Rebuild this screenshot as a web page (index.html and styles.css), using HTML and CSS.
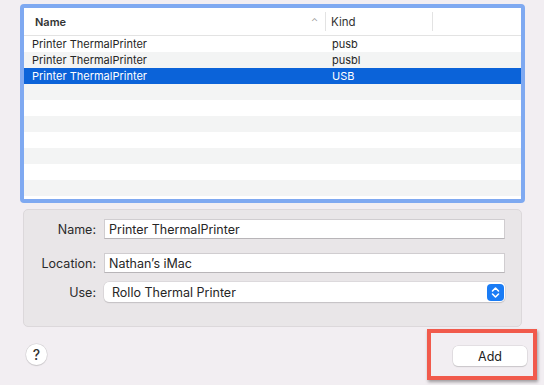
FILE: index.html
```html
<!DOCTYPE html>
<html lang="en">
<head>
  <meta charset="UTF-8">
  <title>Add Printer</title>
  <link rel="stylesheet" href="styles.css">
</head>
<body>
  <div class="sheet">
    <!-- printer list -->
    <div class="list">
      <div class="list-head">
        <div class="col-name">Name <span class="sort">&#8963;</span></div>
        <div class="col-kind">Kind</div>
        <div class="col-rest"></div>
      </div>
      <div class="row"><div class="col-name">Printer ThermalPrinter</div><div class="col-kind">pusb</div></div>
      <div class="row alt"><div class="col-name">Printer ThermalPrinter</div><div class="col-kind">pusbl</div></div>
      <div class="row selected"><div class="col-name">Printer ThermalPrinter</div><div class="col-kind">USB</div></div>
      <div class="row alt"></div>
      <div class="row"></div>
      <div class="row alt"></div>
      <div class="row"></div>
      <div class="row alt"></div>
      <div class="row"></div>
      <div class="row alt"></div>
    </div>

    <!-- printer details -->
    <div class="panel">
      <label class="field-label">Name:</label>
      <div class="field">Printer ThermalPrinter</div>
      <label class="field-label loc">Location:</label>
      <div class="field loc">Nathan’s iMac</div>
      <label class="field-label use">Use:</label>
      <div class="popup use">
        <span>Rollo Thermal Printer</span>
        <svg class="stepper" width="17" height="17" viewBox="0 0 17 17">
          <rect width="17" height="17" rx="4" fill="#1a7cf5"/>
          <path d="M5.5 7 L8.5 4 L11.5 7 M5.5 10 L8.5 13 L11.5 10" fill="none" stroke="#fff" stroke-width="1.6" stroke-linecap="round" stroke-linejoin="round"/>
        </svg>
      </div>
    </div>

    <div class="footer">
      <div class="help">?</div>
      <button class="add-btn">Add</button>
      <div class="highlight"></div>
    </div>
  </div>
</body>
</html>
```

FILE: styles.css
```css
body {
  margin: 0;
  background: #f2eef2;
  font-family: Inter, "Noto Sans", sans-serif;
  font-size: 12.5px;
  color: #262626;
}
.sheet {
  width: 544px;
  height: 385px;
  padding-top: 4px;
  box-sizing: border-box;
  position: relative;
  overflow: hidden;
}
.list {
  margin-left: 20px;
  width: 505px;
  height: 199px;
  box-sizing: border-box;
  border: 4px solid #7fa9f1;
  border-radius: 4px;
  background: #fff;
  overflow: hidden;
  font-size: 11px;
}
.list-head {
  display: flex;
  height: 28px;
  box-sizing: border-box;
  border-bottom: 1px solid #e3e3e3;
  font-weight: 600;
  color: #333;
}
.list-head > div {
  display: flex;
  align-items: center;
  margin: 4px 0;
}
.list-head .col-kind {
  border-left: 1px solid #e3e3e3;
  border-right: 1px solid #e3e3e3;
  padding-left: 5px;
  width: 101px;
  font-weight: 400;
  font-size: 11.5px;
}
.list-head .col-name {
  width: 288px;
  padding-left: 11px;
  justify-content: space-between;
  padding-right: 2px;
}
.sort {
  font-weight: 400;
  color: #999;
  font-size: 9px;
  margin-right: 5px;
}
.row {
  display: flex;
  align-items: center;
  height: 16px;
}
.row .col-name {
  width: 296px;
  padding-left: 8px;
}
.row .col-kind {
  padding-left: 4px;
}
.alt {
  background: #f3f4f4;
}
.selected {
  background: #0b63d9;
  color: #fff;
}
.panel {
  margin: 6px 0 0 23px;
  width: 499px;
  box-sizing: border-box;
  background: #e9e6e8;
  border: 1px solid #dcd8db;
  border-radius: 5px;
  padding: 9px 16px 24px 0;
  display: grid;
  grid-template-columns: 72px 1fr;
  column-gap: 8px;
  align-items: center;
}
.field-label {
  text-align: right;
  color: #2a2a2a;
}
.field {
  height: 20px;
  box-sizing: border-box;
  background: #fff;
  border: 1px solid #d0cdd0;
  border-bottom-color: #b8b5b8;
  padding: 0 4px;
  display: flex;
  align-items: center;
}
.field-label.loc, .field.loc {
  margin-top: 14px;
}
.field-label.use, .popup.use {
  margin-top: 9px;
}
.popup {
  height: 20px;
  box-sizing: border-box;
  background: #fff;
  border-radius: 5px;
  box-shadow: 0 0 0 0.5px #cfcccf, 0 1px 1px rgba(0,0,0,0.2);
  display: flex;
  align-items: center;
  justify-content: space-between;
  padding: 0 1px 0 8px;
}
.stepper {
  display: block;
}
.footer {
  display: flex;
  justify-content: space-between;
  align-items: center;
  padding: 16px 17px 0 26px;
}
.help {
  width: 21px;
  height: 21px;
  border-radius: 50%;
  background: #fff;
  box-shadow: 0 0 0 0.5px #d3d0d3, 0 1px 1px rgba(0,0,0,0.2);
  display: flex;
  align-items: center;
  justify-content: center;
  font-size: 14px;
  font-weight: 500;
  color: #333;
}
.add-btn {
  width: 74px;
  height: 20px;
  border: none;
  border-radius: 5px;
  background: #fff;
  box-shadow: 0 0 0 0.5px #d3d0d3, 0 1px 1px rgba(0,0,0,0.2);
  font-family: inherit;
  font-size: 12.5px;
  color: #222;
  padding: 0;
  margin-top: 3px;
}
/* annotation box over the Add button */
.highlight {
  position: absolute;
  left: 427px;
  top: 329px;
  width: 110px;
  height: 51px;
  box-sizing: border-box;
  border: 4px solid #f15a4c;
  box-shadow: 1px 2px 3px rgba(0,0,0,0.35);
}
```
